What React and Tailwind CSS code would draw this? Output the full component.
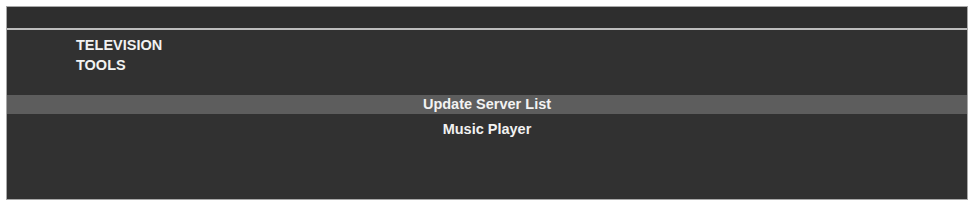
import React from 'react';

const categories = ['TELEVISION', 'TOOLS'];
const actions = [
  { label: 'Update Server List', active: true },
  { label: 'Music Player', active: false },
];

export default function App() {
  return (
    <div className="w-[970px] h-[201px] bg-white pt-[6px] pl-[6px]" style={{ fontFamily: '"Liberation Sans", Arial, sans-serif' }}>
      <div className="w-[962px] h-[194px] border border-[#a8a8a8] bg-[#313131] flex flex-col">
        <div className="h-[21px] bg-[#2e2e2e]" />
        <div className="h-[2px] bg-[#bdbdbd]" />
        <div className="pl-[69px] pt-[5px] h-[65px] flex flex-col">
          {categories.map((c) => (
            <div key={c} className="text-[14.5px] font-bold leading-[20px] text-[#f2f2f2]">{c}</div>
          ))}
        </div>
        <div className="flex flex-col">
          {actions.map((a) => (
            <div
              key={a.label}
              className={
                'h-[19px] text-center text-[14.5px] font-bold leading-[19px] text-[#f2f2f2] mb-[6px] ' +
                (a.active ? 'bg-[#5d5d5d]' : '')
              }
            >
              {a.label}
            </div>
          ))}
        </div>
      </div>
    </div>
  );
}
